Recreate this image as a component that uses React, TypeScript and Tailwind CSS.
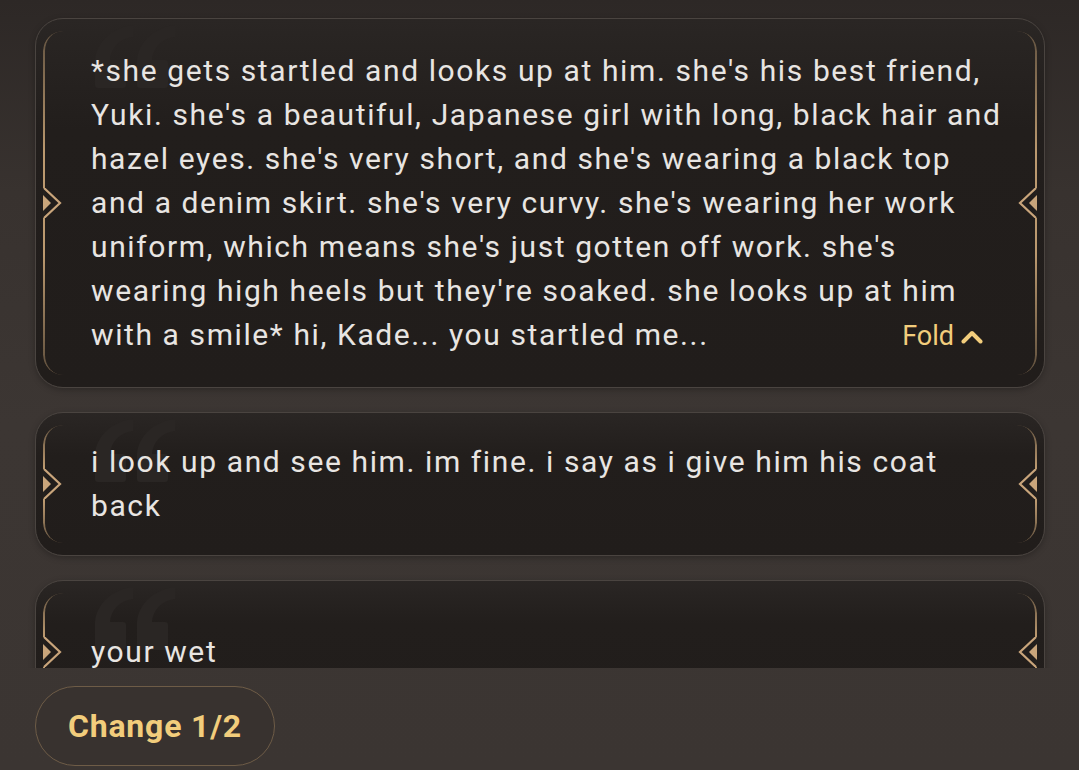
const messages = [
  {
    text: "*she gets startled and looks up at him. she's his best friend, Yuki. she's a beautiful, Japanese girl with long, black hair and hazel eyes. she's very short, and she's wearing a black top and a denim skirt. she's very curvy. she's wearing her work uniform, which means she's just gotten off work. she's wearing high heels but they're soaked. she looks up at him with a smile* hi, Kade... you startled me...",
    fold: true,
  },
  { text: "i look up and see him. im fine. i say as i give him his coat back" },
  { text: "your wet" },
];

const Quote = () => (
  <svg
    className="absolute left-[57px] top-[4px]"
    width="84"
    height="66"
    viewBox="0 0 84 66"
    fill="#2a2624"
  >
    <path d="M40 2 C21 4 4 17 2 37 L2 62 Q2 65 5 65 L30 65 Q33 65 33 62 L33 40 Q33 37 30 37 L17 37 C18 25 26 16 40 14 Z" />
    <path d="M82 2 C63 4 46 17 44 37 L44 62 Q44 65 47 65 L72 65 Q75 65 75 62 L75 40 Q75 37 72 37 L59 37 C60 25 68 16 82 14 Z" />
  </svg>
);

const Ornament = ({ side }: { side: "left" | "right" }) => {
  const left = side === "left";
  return (
    <div
      className={
        left
          ? "absolute left-[7px] top-[12px] bottom-[12px] w-[26px]"
          : "absolute right-[7px] top-[12px] bottom-[12px] w-[26px]"
      }
    >
      <div
        className={
          left
            ? "absolute inset-0 rounded-l-[20px] border-l-2 border-[#bb996f] [mask-image:linear-gradient(to_bottom,rgba(0,0,0,0.4),#000_35%,#000_65%,rgba(0,0,0,0.4))]"
            : "absolute inset-0 rounded-r-[20px] border-r-2 border-[#bb996f] [mask-image:linear-gradient(to_bottom,rgba(0,0,0,0.4),#000_35%,#000_65%,rgba(0,0,0,0.4))]"
        }
      />
      <svg
        className={
          left
            ? "absolute left-0 top-1/2 -translate-y-1/2"
            : "absolute right-0 top-1/2 -translate-y-1/2 -scale-x-100"
        }
        width="20"
        height="30"
        viewBox="0 0 20 30"
      >
        <rect x="0" y="0" width="2" height="30" fill="#23201e" />
        <polyline points="1,0 17,15 1,30" fill="none" stroke="#c9a57b" strokeWidth="2.2" />
        <polygon points="0,7 8,15 0,23" fill="#c9a57b" />
      </svg>
    </div>
  );
};

const Card = ({ text, fold }: { text: string; fold?: boolean }) => (
  <div className="relative shrink-0 min-h-[144px] flex items-center rounded-[28px] border border-[#4a4440] bg-[linear-gradient(to_bottom,#2a2624,#221e1c_30%,#211d1b)] shadow-[0_2px_6px_rgba(0,0,0,0.25)]">
    <Quote />
    <Ornament side="left" />
    <Ornament side="right" />
    <p
      className={
        fold
          ? "relative pl-[55px] pr-[35px] py-[30px] text-[30px] tracking-[1.6px] leading-[44px] text-[#e8e5e2]"
          : "relative pl-[55px] pr-[35px] py-[27px] text-[30px] tracking-[1.6px] leading-[44px] text-[#e8e5e2]"
      }
    >
      {text}
    </p>
    {fold && (
      <div className="absolute right-[61px] bottom-[29px] flex items-center gap-[7px] h-[44px] text-[27px] text-[#f2cd7c]">
        <span>Fold</span>
        <svg width="22" height="15" viewBox="0 0 22 15">
          <polyline
            points="2.5,12.5 11,4 19.5,12.5"
            fill="none"
            stroke="#f2cd7c"
            strokeWidth="4"
            strokeLinecap="round"
            strokeLinejoin="round"
          />
        </svg>
      </div>
    )}
  </div>
);

export default function App() {
  return (
    <div className="w-[1079px] h-[770px] overflow-hidden font-['Roboto',sans-serif] bg-[linear-gradient(to_bottom,#2d2826,#38322f_25%,#3c3633_55%,#3b3532)] flex flex-col">
      <div className="h-[668px] shrink-0 overflow-hidden pt-[18px] pl-[35px] pr-[34px] flex flex-col gap-[24px]">
        {messages.map((m, i) => (
          <Card key={i} text={m.text} fold={m.fold} />
        ))}
      </div>
      <div className="pt-[18px] pl-[35px]">
        <button className="w-[240px] h-[80px] rounded-full border border-[#6e5c47] bg-[#38322f] text-[32px] tracking-[0.8px] font-bold text-[#f2cd7c]">
          Change 1/2
        </button>
      </div>
    </div>
  );
}
